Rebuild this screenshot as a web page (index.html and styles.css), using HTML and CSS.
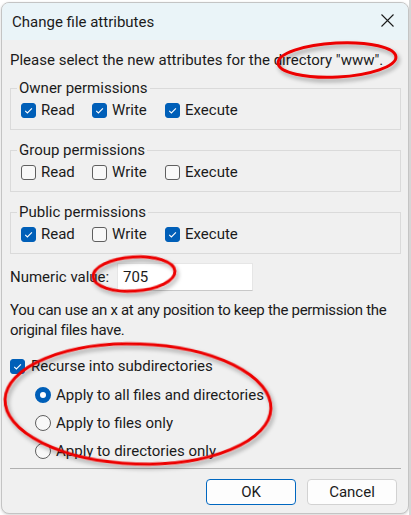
FILE: index.html
```html
<!DOCTYPE html>
<html>
<head>
<meta charset="utf-8">
<link rel="stylesheet" href="styles.css">
</head>
<body>
<div class="screen">
  <div class="dialog">
    <div class="titlebar">
      <span class="title">Change file attributes</span>
      <svg class="close" width="13" height="13" viewBox="0 0 13 13"><path d="M0.5 0.5 L12.5 12.5 M12.5 0.5 L0.5 12.5" stroke="#1b1b1b" stroke-width="1.1" fill="none"/></svg>
    </div>
    <div class="content">
      <p class="intro">Please select the new attributes for the directory "www".</p>

      <fieldset class="group">
        <legend>Owner permissions</legend>
        <div class="perm-row">
          <span class="check"><span class="box on"><svg viewBox="0 0 15 15"><path d="M4.2 7.9 L6.4 10 L10.9 5.3"/></svg></span>Read</span>
          <span class="check"><span class="box on"><svg viewBox="0 0 15 15"><path d="M4.2 7.9 L6.4 10 L10.9 5.3"/></svg></span>Write</span>
          <span class="check"><span class="box on"><svg viewBox="0 0 15 15"><path d="M4.2 7.9 L6.4 10 L10.9 5.3"/></svg></span>Execute</span>
        </div>
      </fieldset>

      <fieldset class="group">
        <legend>Group permissions</legend>
        <div class="perm-row">
          <span class="check"><span class="box"></span>Read</span>
          <span class="check"><span class="box"></span>Write</span>
          <span class="check"><span class="box"></span>Execute</span>
        </div>
      </fieldset>

      <fieldset class="group">
        <legend>Public permissions</legend>
        <div class="perm-row">
          <span class="check"><span class="box on"><svg viewBox="0 0 15 15"><path d="M4.2 7.9 L6.4 10 L10.9 5.3"/></svg></span>Read</span>
          <span class="check"><span class="box"></span>Write</span>
          <span class="check"><span class="box on"><svg viewBox="0 0 15 15"><path d="M4.2 7.9 L6.4 10 L10.9 5.3"/></svg></span>Execute</span>
        </div>
      </fieldset>

      <div class="numeric">
        <span>Numeric value:</span>
        <div class="input">705</div>
      </div>

      <p class="help">You can use an x at any position to keep the permission the original files have.</p>

      <div class="check recurse"><span class="box on"><svg viewBox="0 0 15 15"><path d="M4.2 7.9 L6.4 10 L10.9 5.3"/></svg></span>Recurse into subdirectories</div>

      <div class="radios">
        <div class="radio"><span class="dot on"></span>Apply to all files and directories</div>
        <div class="radio"><span class="dot"></span>Apply to files only</div>
        <div class="radio"><span class="dot"></span>Apply to directories only</div>
      </div>

      <div class="sep"></div>

      <div class="buttons">
        <div class="btn default">OK</div>
        <div class="btn">Cancel</div>
      </div>
    </div>
  </div>

  <svg class="annotations" width="411" height="515" viewBox="0 0 411 515">
    <defs>
      <filter id="sh" x="-20%" y="-20%" width="140%" height="140%">
        <feDropShadow dx="2" dy="3" stdDeviation="2" flood-color="#000" flood-opacity="0.35"/>
      </filter>
    </defs>
    <g fill="none" stroke="#ec0000" stroke-width="3" filter="url(#sh)">
      <ellipse cx="337" cy="60" rx="59" ry="17" transform="rotate(-3 337 60)"/>
      <ellipse cx="134" cy="274" rx="41" ry="17" transform="rotate(-4 134 274)"/>
      <ellipse cx="138" cy="404" rx="133" ry="60" transform="rotate(2 138 404)"/>
    </g>
  </svg>
</div>
</body>
</html>
```

FILE: styles.css
```css
* { box-sizing: border-box; }

body {
  margin: 0;
  background: #ffffff;
  font-family: Roboto, "Noto Sans", "Liberation Sans", sans-serif;
  font-size: 15px;
  color: #1b1b1b;
}

.screen {
  position: relative;
  width: 411px;
  height: 515px;
  overflow: hidden;
  border-right: 2px solid #d6d6d6;
}

.dialog {
  margin: 2px 0 0 1px;
  width: 408px;
  height: 512px;
  border: 1px solid #c4c4c4;
  border-radius: 8px;
  background: #f0f0f0;
  overflow: hidden;
  box-shadow: 0 1px 3px rgba(0,0,0,0.18);
}

.titlebar {
  height: 37px;
  background: #eaf4f8;
  display: flex;
  align-items: center;
  justify-content: space-between;
  padding: 0 14px 0 10px;
}

.title { line-height: 20px; }

.close { display: block; margin-top: -2px; }

.content {
  padding: 0 6px 0 8px;
}

.intro {
  margin: 10px 0 0;
  line-height: 20px;
  white-space: nowrap;
}

.group {
  margin: 8px 1px 0 0;
  padding: 0 10px 9px;
  border: 1px solid #dadada;
  min-width: 0;
}

.group + .group { margin-top: 10px; }

.group legend {
  padding: 0 2px;
  margin-left: -4px;
  line-height: 20px;
}

.perm-row {
  display: grid;
  grid-template-columns: 71px 73px auto;
  margin-top: 2px;
  height: 20px;
}

.check {
  display: flex;
  align-items: center;
  gap: 5px;
  line-height: 20px;
}

.box {
  width: 15px;
  height: 15px;
  border: 1px solid #5f5f5f;
  border-radius: 3px;
  background: #f8f8f8;
  flex: none;
}

.box.on {
  background: #005fb8;
  border-color: #005fb8;
}

.box svg {
  display: block;
  width: 15px;
  height: 15px;
  margin: -1px;
  fill: none;
  stroke: #ffffff;
  stroke-width: 1.1;
}

.numeric {
  margin-top: 9px;
  display: grid;
  grid-template-columns: 107px 136px;
  align-items: center;
  height: 28px;
}

.input {
  height: 28px;
  background: #ffffff;
  border: 1px solid #e6e6e6;
  border-bottom-color: #c8c8c8;
  padding-left: 5px;
  line-height: 26px;
}

.help {
  margin: 9px -10px 0 0;
  line-height: 20px;
  letter-spacing: -0.3px;
}

.recurse {
  margin-top: 16px;
  gap: 6px;
}

.radios {
  margin-top: 9px;
  padding-left: 25px;
  display: flex;
  flex-direction: column;
  gap: 8px;
}

.radio {
  display: flex;
  align-items: center;
  gap: 5px;
  line-height: 20px;
  height: 20px;
}

.dot {
  width: 16px;
  height: 16px;
  border-radius: 50%;
  border: 1px solid #5f5f5f;
  background: #f8f8f8;
  flex: none;
}

.dot.on {
  border: 5px solid #005fb8;
  background: #ffffff;
}

.sep {
  margin: 7px 1px 0 0;
  height: 1px;
  background: #b0b0b0;
}

.buttons {
  margin-top: 10px;
  display: flex;
  justify-content: flex-end;
  gap: 11px;
  padding-right: 5px;
}

.btn {
  width: 90px;
  height: 26px;
  border: 1px solid #d2d2d2;
  border-radius: 4px;
  background: #fdfdfd;
  text-align: center;
  line-height: 24px;
}

.btn.default {
  border-color: #0067c0;
}

.annotations {
  position: absolute;
  left: 0;
  top: 0;
  pointer-events: none;
}
```
